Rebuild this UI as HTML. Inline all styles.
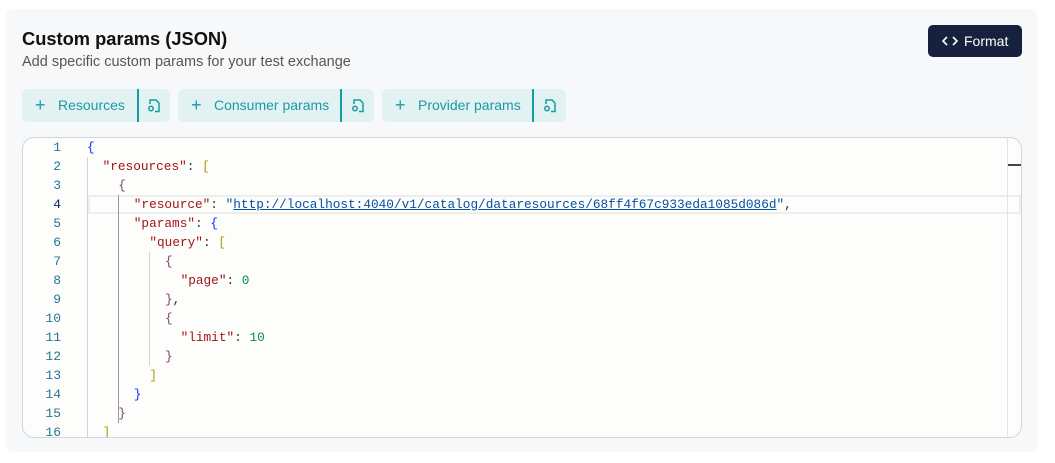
<!DOCTYPE html>
<html><head><meta charset="utf-8"><style>
*{margin:0;padding:0;box-sizing:border-box}
body{width:1055px;height:463px;background:#fff;font-family:"Liberation Sans",sans-serif;position:relative;overflow:hidden}
.card{position:absolute;left:6px;top:9px;width:1031px;height:443px;background:#f7f8fa;border-radius:8px}
h1{position:absolute;left:22px;top:28px;font-size:18.3px;font-weight:700;color:#111}
.sub{position:absolute;left:22px;top:54px;font-size:14.5px;color:#555}
.fmt{position:absolute;left:928px;top:25px;width:94px;height:32px;background:#16223d;border-radius:5px;color:#fff;font-size:14px;line-height:32px;padding-left:36px}
.fmt svg{position:absolute;left:14px;top:10px}
.btn{position:absolute;top:89px;height:33px;background:#e2f2f3;border-radius:5px;color:#1a9ba4;font-size:14px;line-height:33px}
.btn .plus{position:absolute;left:13px;top:0;font-size:18px}
.btn .lab{position:absolute;left:36px;top:0}
.btn .sep{position:absolute;top:0;width:2px;height:33px;background:#1a9ba4}
.btn svg{position:absolute;top:9px}
.ed{position:absolute;left:22px;top:137px;width:1000px;height:301px;background:#fdfdfc;border:1px solid #cfd6df;border-radius:12px;overflow:hidden}
.ln{position:absolute;left:0;width:38px;text-align:right;font-family:"Liberation Mono",monospace;font-size:13px;color:#237893;line-height:19px}
.code{position:absolute;left:64px;font-family:"Liberation Mono",monospace;font-size:12.75px;line-height:19px;white-space:pre;color:#333}
.code i{font-style:normal;display:inline-block;width:15.6px}
.k{color:#a31515}.s{color:#0451a5;text-decoration:underline}.n{color:#098658}
.b1{color:#0431fa}.b2{color:#a8a10e}.b3{color:#7b4a5a}
.g{position:absolute;width:1px;background:#d3d3d3}
</style></head><body>
<div class="card"></div>
<h1>Custom params (JSON)</h1>
<div class="sub">Add specific custom params for your test exchange</div>
<div class="fmt"><svg width="16" height="12" viewBox="0 0 16 12"><path d="M5 2L1 6l4 4M11 2l4 4-4 4" stroke="#fff" stroke-width="1.6" fill="none"/></svg>Format</div>

<div class="btn" style="left:22px;width:148px"><span class="plus">+</span><span class="lab">Resources</span><span class="sep" style="left:115px"></span>
<svg style="left:125px" width="14" height="15" viewBox="0 0 14 15"><path d="M3 6V2h6l3 3v8.5H8" stroke="#1a9ba4" stroke-width="1.5" fill="none"/><circle cx="4" cy="10.5" r="2.2" stroke="#1a9ba4" stroke-width="1.5" fill="none"/></svg></div>
<div class="btn" style="left:178px;width:196px"><span class="plus">+</span><span class="lab">Consumer params</span><span class="sep" style="left:162px"></span>
<svg style="left:173px" width="14" height="15" viewBox="0 0 14 15"><path d="M3 6V2h6l3 3v8.5H8" stroke="#1a9ba4" stroke-width="1.5" fill="none"/><circle cx="4" cy="10.5" r="2.2" stroke="#1a9ba4" stroke-width="1.5" fill="none"/></svg></div>
<div class="btn" style="left:382px;width:184px"><span class="plus">+</span><span class="lab">Provider params</span><span class="sep" style="left:150px"></span>
<svg style="left:161px" width="14" height="15" viewBox="0 0 14 15"><path d="M3 6V2h6l3 3v8.5H8" stroke="#1a9ba4" stroke-width="1.5" fill="none"/><circle cx="4" cy="10.5" r="2.2" stroke="#1a9ba4" stroke-width="1.5" fill="none"/></svg></div>

<div class="ed">
<div style="position:absolute;left:65px;top:57px;width:933px;height:19px;border:2px solid #eeeeee"></div>
<div style="position:absolute;left:984px;top:0;width:1px;height:301px;background:#e4e4e4"></div>
<div style="position:absolute;left:985px;top:26px;width:14px;height:2px;background:#444"></div>
<div class="g" style="left:64px;top:19px;height:290px"></div>
<div class="g" style="left:95px;top:57px;height:228px;background:#999"></div>
<div class="g" style="left:126px;top:114px;height:114px"></div>
<div class="ln" style="top:0">1<br>2<br>3<br><span style="color:#0b216f">4</span><br>5<br>6<br>7<br>8<br>9<br>10<br>11<br>12<br>13<br>14<br>15<br>16</div>
<div class="code" style="top:0"><span class="b1">{</span>
<i></i><span class="k">"resources"</span>: <span class="b2">[</span>
<i></i><i></i><span class="b3">{</span>
<i></i><i></i><i></i><span class="k">"resource"</span>: <span style="color:#0451a5">"<span class="s">http://localhost:4040/v1/catalog/dataresources/68ff4f67c933eda1085d086d</span>"</span>,
<i></i><i></i><i></i><span class="k">"params"</span>: <span class="b1">{</span>
<i></i><i></i><i></i><i></i><span class="k">"query"</span>: <span class="b2">[</span>
<i></i><i></i><i></i><i></i><i></i><span class="b3">{</span>
<i></i><i></i><i></i><i></i><i></i><i></i><span class="k">"page"</span>: <span class="n">0</span>
<i></i><i></i><i></i><i></i><i></i><span class="b3">}</span>,
<i></i><i></i><i></i><i></i><i></i><span class="b3">{</span>
<i></i><i></i><i></i><i></i><i></i><i></i><span class="k">"limit"</span>: <span class="n">10</span>
<i></i><i></i><i></i><i></i><i></i><span class="b3">}</span>
<i></i><i></i><i></i><i></i><span class="b2">]</span>
<i></i><i></i><i></i><span class="b1">}</span>
<i></i><i></i><span class="b3">}</span>
<i></i><span class="b2">]</span></div>
</div>
</body></html>
